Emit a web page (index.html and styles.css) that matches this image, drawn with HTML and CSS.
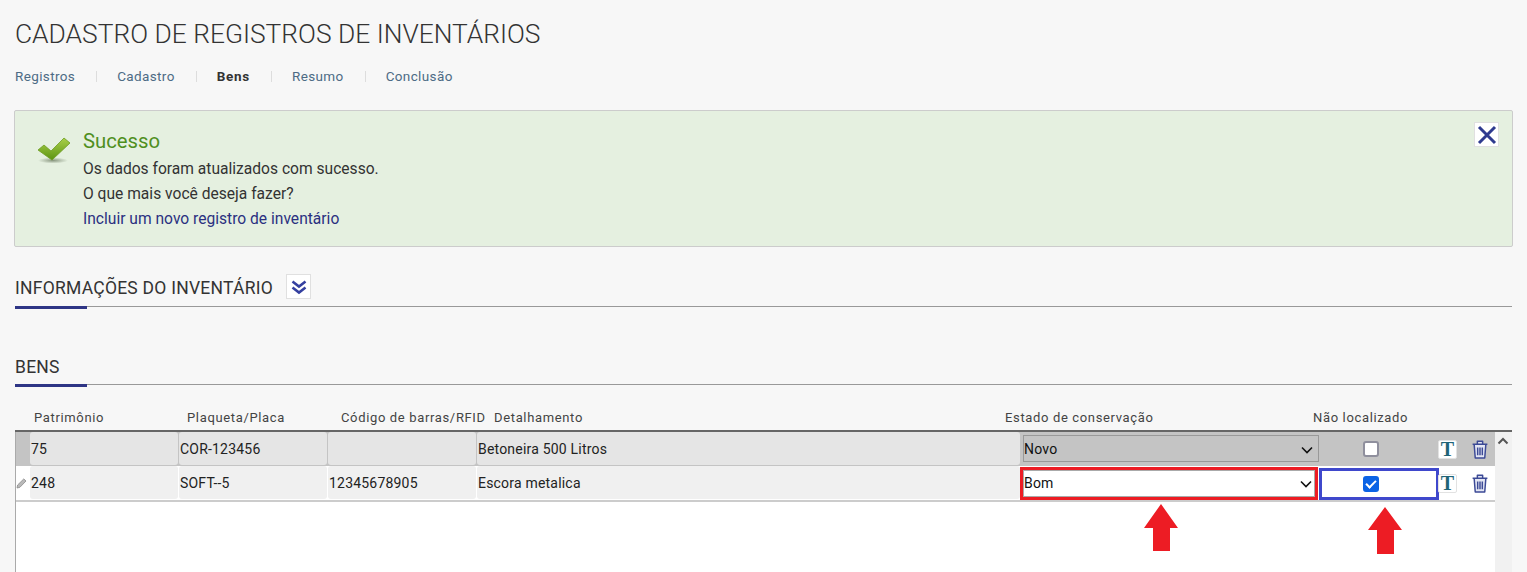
FILE: index.html
```html
<!DOCTYPE html>
<html lang="pt-BR">
<head>
<meta charset="utf-8">
<title>Cadastro de registros de inventários</title>
<link rel="stylesheet" href="styles.css">
</head>
<body>
<main class="page">
  <h1 class="title">CADASTRO DE REGISTROS DE INVENTÁRIOS</h1>
  <nav class="tabs">
    <a class="tab">Registros</a><i class="sep"></i>
    <a class="tab">Cadastro</a><i class="sep"></i>
    <a class="tab active">Bens</a><i class="sep"></i>
    <a class="tab">Resumo</a><i class="sep"></i>
    <a class="tab">Conclusão</a>
  </nav>

  <section class="alert">
    <svg class="alert-icon" width="36" height="32" viewBox="0 0 36 32">
      <defs>
        <linearGradient id="g" x1="0" y1="0" x2="0" y2="1">
          <stop offset="0" stop-color="#a9d04a"/>
          <stop offset="1" stop-color="#5c9412"/>
        </linearGradient>
        <radialGradient id="s"><stop offset="0" stop-color="#6b7a60" stop-opacity=".75"/><stop offset="1" stop-color="#6b7a60" stop-opacity="0"/></radialGradient>
      </defs>
      <ellipse cx="16" cy="26.5" rx="15" ry="3" fill="url(#s)"/>
      <path d="M1 16 7 11 14 17 27 4 33 9 15 26Z" fill="url(#g)" stroke="#6d9c22" stroke-width=".8" stroke-linejoin="round"/>
    </svg>
    <div class="alert-body">
      <h2 class="alert-title">Sucesso</h2>
      <p class="alert-line">Os dados foram atualizados com sucesso.</p>
      <p class="alert-line">O que mais você deseja fazer?</p>
      <p class="alert-line"><a class="alert-link">Incluir um novo registro de inventário</a></p>
    </div>
    <button class="icon-btn close" aria-label="Fechar">
      <svg width="22" height="22" viewBox="0 0 22 22"><path d="M3 3 19 19M19 3 3 19" stroke="#2e3a8f" stroke-width="3" fill="none"/></svg>
    </button>
  </section>

  <header class="section info">
    <h2 class="section-title">INFORMAÇÕES DO INVENTÁRIO</h2>
    <button class="icon-btn expand" aria-label="Expandir">
      <svg width="18" height="18" viewBox="0 0 18 18"><path d="M2.5 3.5 9 8.5 15.5 3.5M2.5 9.5 9 14.5 15.5 9.5" stroke="#3540a0" stroke-width="2.6" fill="none"/></svg>
    </button>
  </header>

  <header class="section bens">
    <h2 class="section-title">BENS</h2>
  </header>

  <div class="thead">
    <span class="th">Patrimônio</span>
    <span class="th">Plaqueta/Placa</span>
    <span class="th">Código de barras/RFID</span>
    <span class="th">Detalhamento</span>
    <span class="th">Estado de conservação</span>
    <span class="th">Não localizado</span>
  </div>

  <div class="table">
    <div class="tbody">
      <div class="row row-selected">
        <span class="gutter"></span>
        <span class="cell">75</span>
        <span class="cell">COR-123456</span>
        <span class="cell"></span>
        <span class="cell">Betoneira 500 Litros</span>
        <span class="state">
          <select class="select"><option>Novo</option></select>
          <svg class="chevron" width="12" height="8" viewBox="0 0 12 8"><path d="M1 1.500 6 6.500 11 1.500" stroke="#111" stroke-width="1.600" fill="none"/></svg>
        </span>
        <span class="check"><input class="box" type="checkbox"></span>
        <span class="tool"><b class="t-icon">T</b></span>
        <span class="tool">
          <svg class="trash" width="18" height="19" viewBox="0 0 17 18"><path d="M1.5 4H15.5M6 3.6V1.2H11V3.6M3 4.500 4 17H13L14 4.500M6.3 7V14.5M8.5 7V14.5M10.7 7V14.5" stroke="#3c4a96" stroke-width="1.4" fill="#e3e6f3" stroke-linejoin="round"/></svg>
        </span>
      </div>
      <div class="row row-edit">
        <span class="gutter">
          <svg width="11" height="11" viewBox="0 0 11 11"><path d="M1 10 1.6 7 7.8 .9 10 3 3.9 9.3Z" fill="#b9b9b9" stroke="#8a8a8a" stroke-width=".8"/></svg>
        </span>
        <span class="cell">248</span>
        <span class="cell">SOFT--5</span>
        <span class="cell">12345678905</span>
        <span class="cell">Escora metalica</span>
        <span class="state mark-red">
          <select class="select"><option>Bom</option></select>
          <svg class="chevron" width="12" height="8" viewBox="0 0 12 8"><path d="M1 1.500 6 6.500 11 1.500" stroke="#111" stroke-width="1.600" fill="none"/></svg>
        </span>
        <span class="check mark-blue"><input class="box" type="checkbox" checked></span>
        <span class="tool"><b class="t-icon">T</b></span>
        <span class="tool">
          <svg class="trash" width="18" height="19" viewBox="0 0 17 18"><path d="M1.5 4H15.5M6 3.6V1.2H11V3.6M3 4.500 4 17H13L14 4.500M6.3 7V14.5M8.5 7V14.5M10.7 7V14.5" stroke="#3c4a96" stroke-width="1.4" fill="#e3e6f3" stroke-linejoin="round"/></svg>
        </span>
      </div>
      <svg class="arrow arrow-a" width="34" height="47" viewBox="0 0 34 47"><path d="M17 0 34 24H26V47H9V24H0Z" fill="#ed1c24"/></svg>
      <svg class="arrow arrow-b" width="34" height="47" viewBox="0 0 34 47"><path d="M17 0 34 23H26V47H9V23H0Z" fill="#ed1c24"/></svg>
    </div>
    <div class="scrollbar">
      <svg width="12" height="8" viewBox="0 0 12 8"><path d="M1.5 6.5 6 2 10.500 6.500" stroke="#555" stroke-width="2" fill="none"/></svg>
    </div>
  </div>
</main>
</body>
</html>
```

FILE: styles.css
```css
* { box-sizing: border-box; }
html, body { margin: 0; height: 572px; overflow: hidden; }
body {
  background: #f7f7f7;
  color: #333;
  font-family: Roboto, "Liberation Sans", sans-serif;
  font-size: 14px;
}
.page { padding: 0 15px; }
.title {
  margin: 0;
  padding-top: 19px;
  height: 60px;
  font-size: 26.36px;
  line-height: 30px;
  font-weight: 300;
  color: #333;
}
.tabs {
  display: flex;
  align-items: center;
  height: 32px;
  font-size: 13.5px;
  letter-spacing: .37px;
}
.tab { color: #4d6b85; }
.tab.active { color: #333; font-weight: 700; letter-spacing: .7px; }
.sep { width: 1px; height: 11px; background: #ddd; margin: 0 20px 0 21px; }

.alert {
  position: relative;
  display: flex;
  margin: 18px -1px 0;
  height: 137px;
  background: #e5f0e0;
  border: 1px solid #ccc;
  border-radius: 2px;
  padding: 20px 0 0 22px;
}
.alert-icon { margin: 3px 10px 0 0; flex: none; }
.alert-title {
  margin: -2px 0 4px;
  font-size: 20.3px;
  line-height: 24px;
  font-weight: 400;
  color: #4f8f1e;
}
.alert-line {
  margin: 0;
  line-height: 25px;
  font-size: 15.6px;
  color: #333;
}
.alert-link { color: #2b3080; }
.icon-btn {
  display: flex;
  align-items: center;
  justify-content: center;
  padding: 0;
  width: 25px;
  height: 25px;
  background: #fff;
  border: 1px solid #e0e0e0;
}
.close { position: absolute; top: 11px; right: 13px; }

.section {
  display: flex;
  align-items: flex-start;
  border-bottom: 1px solid #999;
  position: relative;
}
.section::after {
  content: "";
  position: absolute;
  left: 0;
  bottom: -3px;
  width: 72px;
  height: 3px;
  background: #2e3585;
}
.info { margin-top: 27px; height: 33px; }
.bens { margin-top: 45px; height: 33px; }
.info .section-title { padding-top: 1px; }
.bens .section-title { padding-top: 2px; }
.section-title {
  margin: 0;
  font-size: 17.5px;
  line-height: 26px;
  font-weight: 400;
  color: #333;
  letter-spacing: .25px;
}
.expand { margin-left: 13px; }

.thead {
  display: grid;
  grid-template-columns: 153px 154px 153px 511px 308px 1fr;
  padding: 25px 0 0 19px;
  height: 45px;
}
.th {
  font-size: 13px;
  line-height: 16px;
  letter-spacing: .65px;
  color: #444;
  white-space: nowrap;
}

.table {
  display: flex;
  height: 143px;
  border-top: 2px solid #666;
}
.tbody {
  position: relative;
  flex: 1;
  background: #fff;
  border-left: 1px solid #aaa;
}
.scrollbar {
  width: 17px;
  background: #f1f1f1;
  padding: 5px 0 0 2px;
}
.scrollbar svg { display: block; }
.row {
  display: grid;
  grid-template-columns: 14px 149px 149px 149px 544px 298px 120px 21px 1fr;
  align-items: stretch;
  font-size: 14px;
  letter-spacing: .2px;
  color: #222;
}
.row-selected { height: 34px; background: #c4c4c4; }
.row-edit { height: 36px; border-bottom: 2px solid #ccc; }
.gutter { display: flex; align-items: center; }
.cell {
  display: flex;
  align-items: center;
  padding-left: 1px;
  margin: 0 1px 1px 0;
  border-radius: 3px;
}
.row-selected .cell { background: #e5e5e5; }
.row-edit .cell { background: #f0f0f0; }
.state { position: relative; display: flex; padding: 3px 0 4px 2px; }
.select {
  appearance: none;
  width: 100%;
  height: 27px;
  padding: 0;
  font: 14px Roboto, sans-serif;
  letter-spacing: .2px;
  color: #111;
  background: transparent;
  border: 1px solid #999;
  border-radius: 0;
}
.row-edit .select { background: #fff; }
.chevron { position: absolute; right: 6px; top: 14px; pointer-events: none; }
.mark-red {
  border: 3px solid #ed1c24;
  margin: 1px 1px 0 -1px;
  padding: 0;
  height: 33px;
}
.mark-red .select { border-color: #aaa; padding-bottom: 2px; }
.mark-red .chevron { right: 3px; top: 10px; }
.check { display: flex; align-items: center; justify-content: center; padding: 0 16px 1px 0; }
.mark-blue { border: 3px solid #3f48cc; height: 32px; margin-top: 2px; padding: 0 17px 0 0; }
.box {
  appearance: none;
  position: relative;
  margin: 0;
  width: 16px;
  height: 16px;
  background: #fff;
  border: 2px solid #8f8f9d;
  border-radius: 3px;
}
.box:checked { background: #0b63e5; border-color: #0b63e5; }
.box:checked::after {
  content: "";
  position: absolute;
  left: 3px;
  top: 0;
  width: 4px;
  height: 8px;
  border: solid #fff;
  border-width: 0 2px 2px 0;
  transform: rotate(45deg);
}
.tool { display: flex; align-items: center; padding-left: 0; }
.t-icon {
  display: block;
  width: 19px;
  height: 19px;
  margin-left: -1px;
  background: #fff;
  border: 1px solid #e2e2e2;
  border-radius: 2px;
  font: 700 20px/17px "Liberation Serif", serif;
  color: #1f6477;
  text-align: center;
}
.trash { margin-left: 11px; }
.arrow { position: absolute; }
.arrow-a { left: 1128px; top: 72px; }
.arrow-b { left: 1352px; top: 75px; }
```
